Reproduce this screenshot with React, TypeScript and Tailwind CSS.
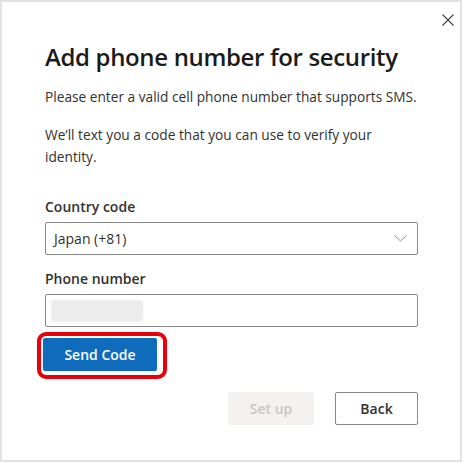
import React from "react";

export default function App() {
  return (
    <div className="w-[464px] h-[464px] bg-white" style={{ fontFamily: '"Open Sans", "Noto Sans", sans-serif' }}>
      <div className="relative w-[462px] h-[462px] border-2 border-[#e3e3e3] bg-white">
        <button className="absolute left-[439px] top-[11px] w-[14px] h-[14px] flex items-center justify-center" aria-label="Close">
          <svg width="12" height="12" viewBox="0 0 12 12">
            <path d="M0.5 0.5 L11.5 11.5 M11.5 0.5 L0.5 11.5" stroke="#444" strokeWidth="1.1" fill="none" />
          </svg>
        </button>
        <div className="pl-[43px] pt-[39px] w-[416px] flex flex-col">
          <h1 className="text-[24px] leading-[32px] font-semibold text-[#1b1b1b] tracking-[-0.35px]">Add phone number for security</h1>
          <p className="mt-[14px] text-[13.7px] leading-[20px] text-[#323130]">Please enter a valid cell phone number that supports SMS.</p>
          <p className="mt-[17px] text-[13.7px] leading-[22px] text-[#323130]">We’ll text you a code that you can use to verify your identity.</p>
          <label className="mt-[29px] text-[14px] leading-[20px] font-semibold text-[#323130]">Country code</label>
          <div className="mt-[5px] h-[33px] w-[373px] border border-[#8a8886] rounded-[2px] flex items-center justify-between pl-[8px] pr-[10px]">
            <span className="text-[14px] text-[#323130]">Japan (+81)</span>
            <svg width="13" height="7" viewBox="0 0 13 7">
              <path d="M0.5 0.5 L6.5 6 L12.5 0.5" stroke="#8a8886" strokeWidth="1" fill="none" />
            </svg>
          </div>
          <label className="mt-[14px] text-[14px] leading-[20px] font-semibold text-[#323130]">Phone number</label>
          <div className="mt-[5px] h-[33px] w-[373px] border border-[#8a8886] rounded-[2px] flex items-center pl-[5px]">
            <div className="w-[92px] h-[22px] bg-[#ececec] rounded-[3px] blur-[1px]" />
          </div>
          <div className="mt-[5px] -ml-[8px] w-[130px] h-[47px] border-[4px] border-[#e8000b] rounded-[9px] p-[2px]">
            <button className="w-[114px] h-[33px] bg-[#0f6cbd] text-white text-[14px] font-semibold rounded-[2px]">Send Code</button>
          </div>
          <div className="mt-[13px] flex justify-end gap-[21px]">
            <button className="w-[86px] h-[33px] bg-[#f3f2f1] text-[#c8c6c4] text-[14px] font-semibold rounded-[2px]">Set up</button>
            <button className="w-[83px] h-[33px] border border-[#8a8886] bg-white text-[#323130] text-[14px] font-semibold rounded-[2px]">Back</button>
          </div>
        </div>
      </div>
    </div>
  );
}
